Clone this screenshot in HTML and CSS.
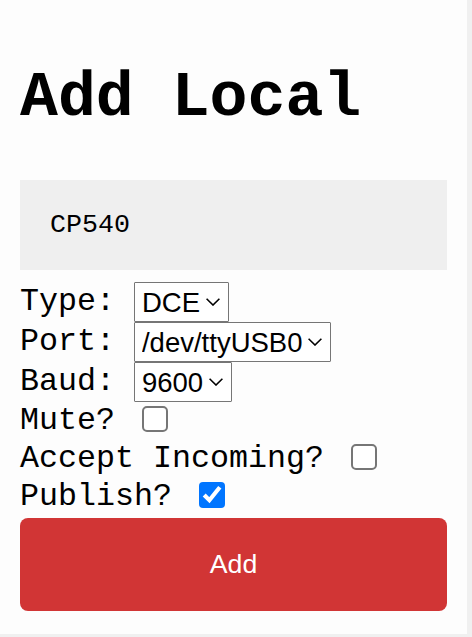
FILE: index.html
```html
<!DOCTYPE html>
<html>
<head>
<meta charset="utf-8">
<link rel="stylesheet" href="styles.css">
</head>
<body>
<div class="panel">
  <h1 class="title">Add Local</h1>
  <form class="form">
    <input class="name" type="text" value="CP540">
    <label class="row">Type:&nbsp;<select class="sel"><option>DCE</option></select></label>
    <label class="row">Port:&nbsp;<select class="sel"><option>/dev/ttyUSB0</option></select></label>
    <label class="row">Baud:&nbsp;<select class="sel"><option>9600</option></select></label>
    <label class="row">Mute?&nbsp;<input class="chk" type="checkbox"></label>
    <label class="row">Accept Incoming?&nbsp;<input class="chk" type="checkbox"></label>
    <label class="row">Publish?&nbsp;<input class="chk" type="checkbox" checked></label>
    <button class="add" type="button">Add</button>
  </form>
</div>
</body>
</html>
```
FILE: styles.css
```css
html, body {
  margin: 0;
  background: #f0f0f0;
}
.panel {
  width: 467px;
  height: 634px;
  box-sizing: border-box;
  padding: 20px 20px 0;
  background: #fdfdfd;
  font-family: "Liberation Mono", monospace;
  color: #000;
}
.title {
  font-family: "Liberation Mono", monospace;
  font-size: 63.2px;
  font-weight: bold;
  margin: 42px 0 46.4px;
}
.form {
  display: flex;
  flex-direction: column;
}
.name {
  display: block;
  box-sizing: border-box;
  width: 100%;
  height: 90px;
  border: none;
  background: #efefef;
  padding: 0 30px;
  font-family: "Liberation Mono", monospace;
  font-size: 26.67px;
  color: #000;
  margin: 0 0 12px;
  outline: none;
}
.row {
  display: flex;
  align-items: center;
  font-size: 31.67px;
  line-height: normal;
  font-family: "Liberation Mono", monospace;
  white-space: pre;
}
.sel {
  appearance: none;
  -webkit-appearance: none;
  box-sizing: border-box;
  font-family: "Liberation Sans", Arial, sans-serif;
  font-size: 27.5px;
  height: 40px;
  margin: 0;
  padding: 0 27px 0 7px;
  color: #000;
  background-color: #fff;
  border: 1px solid #767676;
  border-radius: 1px;
  background-image: url("data:image/svg+xml;utf8,<svg xmlns='http://www.w3.org/2000/svg' width='14' height='8' viewBox='0 0 14 8'><path d='M0.6 0.8 L7 7 L13.4 0.8' fill='none' stroke='black' stroke-width='1.6'/></svg>");
  background-repeat: no-repeat;
  background-position: right 8px center;
  background-size: 14px 8px;
}
.chk {
  zoom: 2;
  margin: 2px 1.5px 4px 4px;
}
.add {
  display: block;
  width: 100%;
  height: 93px;
  margin-top: 2px;
  border: none;
  border-radius: 8px;
  background: #d13535;
  color: #fff;
  font-family: "Liberation Sans", Arial, sans-serif;
  font-size: 26.67px;
}
```
